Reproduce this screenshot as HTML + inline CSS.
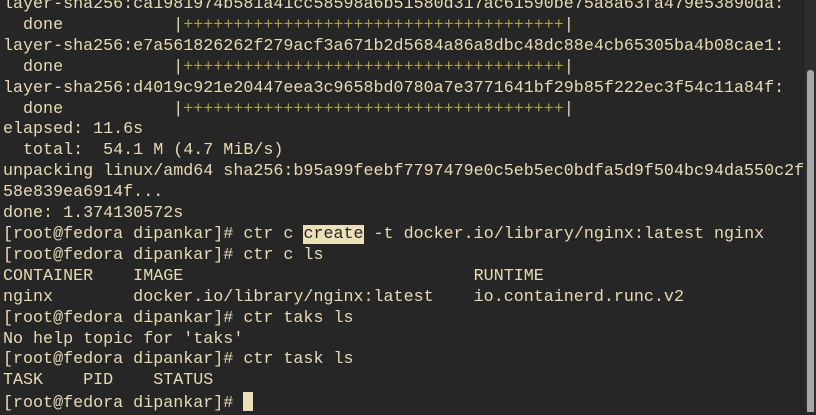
<!DOCTYPE html>
<html><head><style>
html,body{margin:0;padding:0;background:#262626;width:816px;height:412px;overflow:hidden}
pre{position:absolute;left:3px;top:-5px;margin:0;font-family:"Liberation Mono",monospace;font-size:16.7px;line-height:20.9px;color:#e8dab2;white-space:pre}
.g{color:#a7a52a}
.h{background:#ece0b6;color:#262626}
.c{display:inline-block;width:10px;height:19px;background:#ece0b6;vertical-align:-4px}
#sb{position:absolute;left:805px;top:0;width:11px;height:412px;background:#2e2e2e}
#th{position:absolute;left:807px;top:70px;width:7px;height:342px;background:#a6a6a6;border-radius:3px 3px 0 0}
</style></head><body>
<pre>layer-sha256:ca1981974b581a41cc58598a6b51580d317ac61590be75a8a63fa479e53890da:
  done           |<span class="g">++++++++++++++++++++++++++++++++++++++</span>|
layer-sha256:e7a561826262f279acf3a671b2d5684a86a8dbc48dc88e4cb65305ba4b08cae1:
  done           |<span class="g">++++++++++++++++++++++++++++++++++++++</span>|
layer-sha256:d4019c921e20447eea3c9658bd0780a7e3771641bf29b85f222ec3f54c11a84f:
  done           |<span class="g">++++++++++++++++++++++++++++++++++++++</span>|
elapsed: 11.6s
  total:  54.1 M (4.7 MiB/s)
unpacking linux/amd64 sha256:b95a99feebf7797479e0c5eb5ec0bdfa5d9f504bc94da550c2f
58e839ea6914f...
done: 1.374130572s
[root@fedora dipankar]# ctr c <span class="h">create</span> -t docker.io/library/nginx:latest nginx
[root@fedora dipankar]# ctr c ls
CONTAINER    IMAGE                             RUNTIME
nginx        docker.io/library/nginx:latest    io.containerd.runc.v2
[root@fedora dipankar]# ctr taks ls
No help topic for 'taks'
[root@fedora dipankar]# ctr task ls
TASK    PID    STATUS
[root@fedora dipankar]# <span class="c"></span></pre>
<div id="sb"></div><div id="th"></div>
</body></html>
